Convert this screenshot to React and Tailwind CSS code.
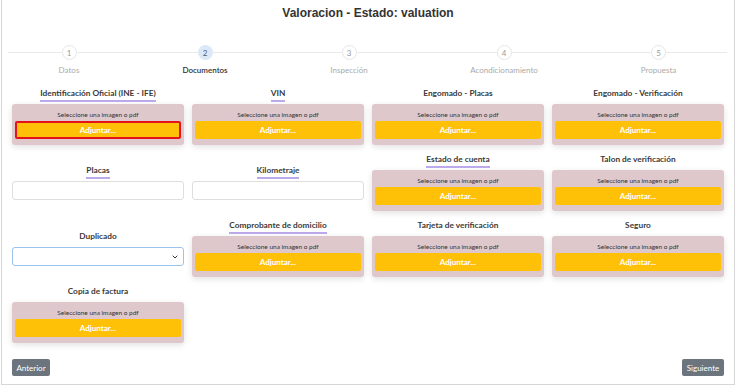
import { ChevronDown } from 'lucide-react';

const steps = [
  { n: 1, label: 'Datos' },
  { n: 2, label: 'Documentos', active: true },
  { n: 3, label: 'Inspección' },
  { n: 4, label: 'Acondicionamiento' },
  { n: 5, label: 'Propuesta' },
];

const fields = [
  { label: 'Identificación Oficial (INE - IFE)', type: 'file', underline: true, focus: true },
  { label: 'VIN', type: 'file', underline: true },
  { label: 'Engomado - Placas', type: 'file' },
  { label: 'Engomado - Verificación', type: 'file' },
  { label: 'Placas', type: 'input', underline: true },
  { label: 'Kilometraje', type: 'input', underline: true },
  { label: 'Estado de cuenta', type: 'file', underline: true },
  { label: 'Talon de verificación', type: 'file' },
  { label: 'Duplicado', type: 'select' },
  { label: 'Comprobante de domicilio', type: 'file', underline: true },
  { label: 'Tarjeta de verificación', type: 'file' },
  { label: 'Seguro', type: 'file' },
  { label: 'Copia de factura', type: 'file' },
];

function Label({ text, underline }) {
  return (
    <div className="flex justify-center mb-[2px]">
      <span
        className={`text-[8.3px] leading-[11px] font-bold text-[#3a3a3a] pb-[1px] border-b-2 ${
          underline ? 'border-[#bca9ec]' : 'border-transparent'
        }`}
      >
        {text}
      </span>
    </div>
  );
}

function Field({ field }) {
  return (
    <div>
      <Label text={field.label} underline={field.underline} />
      {field.type === 'file' && (
        <div className="bg-[#dfc8cb] rounded-[3px] shadow-[0_2px_6px_rgba(0,0,0,0.12)] pt-[4px] px-[3px] pb-[6px] h-[41px]">
          <div className="text-center text-[6.5px] leading-[13px] text-[#333]">Seleccione una imagen o pdf</div>
          <button
            className={`block w-full h-[18px] rounded-[2px] bg-[#ffc107] text-white text-[8px] leading-[14px] font-bold ${
              field.focus ? 'border-2 border-[#e4121b]' : ''
            }`}
          >
            Adjuntar...
          </button>
        </div>
      )}
      {field.type === 'input' && (
        <div className="h-[19px] bg-white border border-[#dedede] rounded-[3px]"></div>
      )}
      {field.type === 'select' && (
        <div className="h-[19px] bg-white border border-[#9cc3ee] rounded-[3px] flex items-center justify-end pr-[4px]">
          <ChevronDown size={8} strokeWidth={3} className="text-[#333]" />
        </div>
      )}
    </div>
  );
}

export default function App() {
  return (
    <div className="w-[736px] h-[386px] bg-white px-[1px] font-['Lato',sans-serif]">
      <div className="h-[385px] border border-t-0 border-[#d6d6d6] flex flex-col">
        <h1 className="pt-[6px] text-center text-[12px] leading-[14px] font-bold text-[#333] font-['Liberation_Sans',Arial,sans-serif]">
          Valoracion - Estado: valuation
        </h1>

        {/* Stepper */}
        <div className="mt-[25px] px-[6px] grid grid-cols-[122px_150px_138px_172px_137px]">
          {steps.map((s) => (
            <div key={s.n} className="flex flex-col items-center">
              <div className="flex items-center w-full">
                <div className="flex-1 h-px bg-[#e9e9e9]"></div>
                <div
                  className={`w-[15px] h-[15px] rounded-full flex items-center justify-center text-[8px] ${
                    s.active
                      ? 'bg-[#dbe9f7] text-[#4c5d74]'
                      : 'bg-white border border-[#e6e6e6] text-[#9a9a9a]'
                  }`}
                >
                  {s.n}
                </div>
                <div className="flex-1 h-px bg-[#e9e9e9]"></div>
              </div>
              <div
                className={`mt-[5px] text-[8px] leading-[11px] ${
                  s.active ? 'text-[#333] font-semibold' : 'text-[#aaaaaa]'
                }`}
              >
                {s.label}
              </div>
            </div>
          ))}
        </div>

        {/* Documents grid */}
        <div className="mt-[12px] px-[10px] grid grid-cols-4 gap-x-2 gap-y-[9px] items-center">
          {fields.map((f) => (
            <Field key={f.label} field={f} />
          ))}
        </div>

        {/* Footer */}
        <div className="mt-auto mb-[8px] px-[10px] flex justify-between items-end">
          <button className="h-[17px] w-[38px] rounded-[2px] bg-[#6c757d] text-white text-[8px]">Anterior</button>
          <button className="h-[17px] w-[42px] rounded-[2px] bg-[#6c757d] text-white text-[8px]">Siguiente</button>
        </div>
      </div>
    </div>
  );
}
